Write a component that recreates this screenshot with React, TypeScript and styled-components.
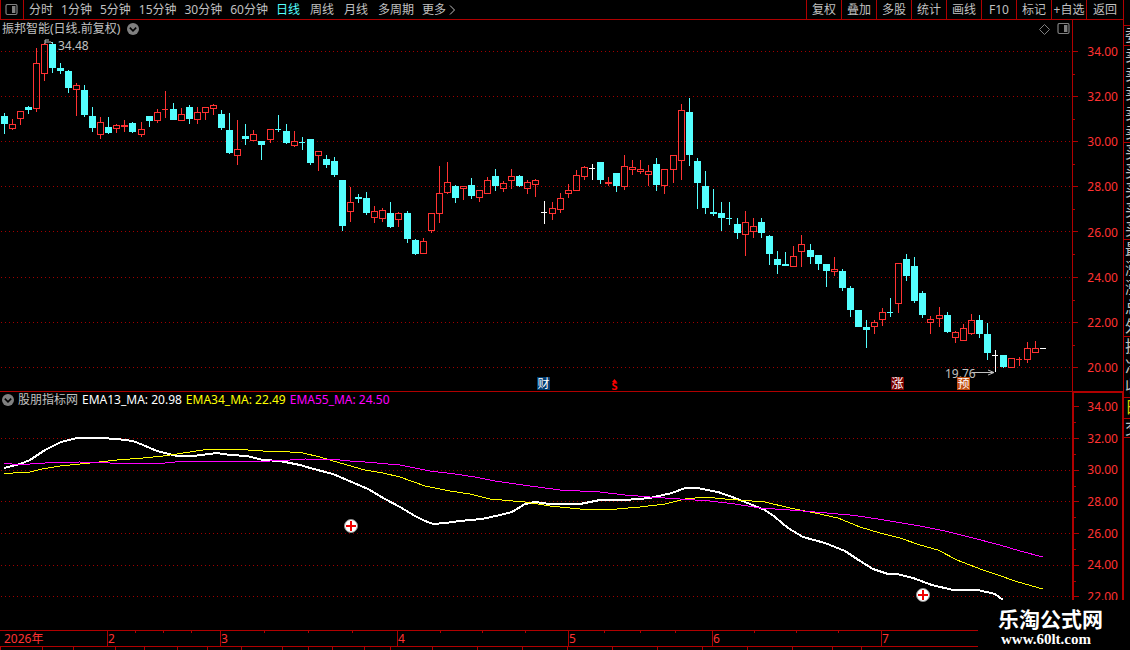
import React from "react";
import styled, { createGlobalStyle } from "styled-components";

const color = {
  line: "#b00000",
  dot: "#a00000",
  priceText: "#ff3232",
  up: "#ff3232",
  down: "#54ffff",
  flat: "#ffffff",
  text: "#c0c0c0",
  icon: "#808080",
};

const GlobalStyle = createGlobalStyle`
  * { box-sizing: border-box; }
  body {
    margin: 0;
    background: #000;
    color: ${color.text};
    font-family: "Noto Sans", "Noto Sans CJK SC", sans-serif;
    font-size: 12px;
    line-height: 16px;
    overflow: hidden;
  }
`;

type Kind = "u" | "d" | "w";
/* centre x, high, body top, body bottom, low, kind */
type Candle = [number, number, number, number, number, Kind];

const candles: Candle[] = [
  [4, 113, 116, 124, 134, "d"], [12, 119, 124, 129, 130, "u"], [20, 111, 111, 119, 125, "u"],
  [28, 106, 107, 110, 114, "d"], [36, 48, 63, 109, 112, "u"], [44, 43, 44, 74, 81, "u"],
  [52, 42, 44, 68, 73, "d"], [60, 63, 68, 71, 74, "d"], [68, 70, 71, 88, 93, "d"],
  [76, 83, 85, 90, 116, "u"], [84, 85, 90, 115, 117, "d"], [92, 107, 116, 128, 132, "d"],
  [100, 117, 122, 135, 139, "u"], [108, 117, 127, 133, 134, "d"], [116, 124, 125, 129, 133, "u"],
  [124, 120, 125, 127, 132, "u"], [132, 122, 123, 132, 133, "d"], [141, 122, 129, 135, 137, "u"],
  [149, 116, 116, 121, 127, "d"], [157, 109, 112, 121, 123, "u"], [165, 91, 109, 110, 118, "u"],
  [173, 103, 109, 120, 120, "d"], [181, 108, 114, 121, 121, "u"], [189, 105, 107, 119, 124, "d"],
  [197, 107, 112, 120, 124, "u"], [205, 107, 107, 113, 120, "u"], [213, 104, 105, 109, 115, "u"],
  [221, 110, 114, 128, 130, "d"], [229, 113, 130, 153, 154, "d"], [237, 120, 149, 156, 165, "u"],
  [245, 124, 136, 139, 145, "d"], [253, 130, 134, 141, 141, "u"], [261, 141, 141, 145, 160, "d"],
  [270, 129, 129, 140, 143, "u"], [278, 115, 129, 130, 132, "d"], [286, 124, 131, 143, 144, "d"],
  [294, 131, 141, 146, 147, "u"], [302, 137, 142, 143, 150, "d"], [310, 139, 139, 163, 165, "d"],
  [318, 151, 151, 156, 171, "u"], [326, 155, 159, 165, 168, "d"], [334, 157, 161, 175, 177, "d"],
  [342, 180, 180, 226, 231, "d"], [350, 187, 202, 212, 222, "u"], [358, 194, 197, 199, 203, "d"],
  [366, 192, 198, 213, 215, "d"], [374, 206, 211, 218, 223, "u"], [382, 208, 210, 219, 222, "u"],
  [390, 202, 213, 227, 228, "d"], [398, 212, 213, 220, 227, "u"], [407, 211, 213, 239, 243, "d"],
  [415, 239, 240, 254, 255, "d"], [423, 238, 241, 254, 254, "u"], [431, 213, 213, 231, 233, "u"],
  [439, 166, 193, 214, 223, "u"], [447, 162, 182, 193, 194, "u"], [455, 185, 186, 198, 203, "d"],
  [463, 186, 186, 189, 200, "u"], [471, 178, 185, 196, 199, "d"], [479, 190, 190, 198, 202, "u"],
  [487, 177, 180, 194, 194, "u"], [495, 169, 176, 186, 191, "d"], [503, 181, 183, 189, 192, "u"],
  [511, 169, 176, 181, 189, "u"], [519, 175, 176, 186, 187, "d"], [527, 180, 182, 189, 194, "u"],
  [535, 179, 180, 185, 197, "u"], [544, 201, 212, 213, 224, "w"], [552, 202, 208, 214, 220, "u"],
  [560, 193, 198, 210, 213, "u"], [568, 184, 190, 194, 198, "u"], [576, 170, 175, 191, 191, "u"],
  [584, 166, 167, 177, 180, "u"], [592, 164, 168, 169, 180, "w"], [600, 162, 162, 180, 184, "d"],
  [608, 177, 182, 184, 186, "u"], [616, 173, 173, 186, 192, "d"], [624, 155, 166, 187, 190, "u"],
  [632, 160, 167, 170, 175, "u"], [640, 160, 169, 172, 174, "u"], [648, 165, 171, 175, 186, "u"],
  [656, 158, 164, 185, 191, "d"], [664, 169, 169, 186, 194, "u"], [673, 155, 155, 170, 183, "u"],
  [681, 104, 110, 161, 180, "u"], [689, 98, 112, 155, 166, "d"], [697, 158, 161, 183, 209, "d"],
  [705, 171, 186, 208, 214, "d"], [713, 189, 212, 214, 216, "d"], [721, 202, 213, 218, 231, "d"],
  [729, 202, 218, 219, 225, "d"], [737, 218, 224, 233, 239, "d"], [745, 211, 222, 235, 256, "u"],
  [753, 218, 226, 232, 238, "u"], [761, 218, 222, 233, 238, "d"], [769, 235, 236, 254, 265, "d"],
  [777, 251, 259, 265, 274, "d"], [785, 252, 264, 266, 266, "d"], [793, 246, 256, 267, 267, "u"],
  [801, 235, 244, 252, 267, "u"], [810, 244, 250, 257, 264, "d"], [818, 255, 255, 264, 270, "d"],
  [826, 264, 264, 271, 287, "d"], [834, 257, 269, 272, 276, "u"], [842, 269, 271, 288, 291, "d"],
  [850, 286, 288, 310, 317, "d"], [858, 310, 310, 327, 327, "d"], [866, 320, 327, 330, 348, "d"],
  [874, 320, 322, 327, 334, "u"], [882, 308, 312, 320, 326, "u"], [890, 298, 312, 313, 317, "d"],
  [898, 263, 263, 304, 313, "u"], [906, 254, 259, 276, 281, "d"], [914, 257, 266, 301, 303, "d"],
  [922, 291, 293, 315, 318, "d"], [930, 316, 319, 323, 334, "u"], [939, 307, 315, 319, 327, "u"],
  [947, 312, 315, 332, 333, "d"], [955, 331, 332, 338, 343, "u"], [963, 324, 328, 341, 341, "u"],
  [971, 314, 320, 334, 335, "u"], [979, 315, 320, 334, 338, "d"], [987, 323, 334, 353, 360, "d"],
  [995, 350, 355, 356, 372, "w"], [1003, 355, 355, 367, 368, "d"], [1011, 358, 358, 368, 368, "u"],
  [1019, 357, 359, 360, 366, "u"], [1027, 342, 348, 360, 363, "u"], [1035, 341, 348, 353, 353, "u"],
  [1043, 348, 348, 349, 349, "w"],
];

const ema13 =
  "4,468 12,466 20,464 30,460 45,450 61,442 77,438 100,438 117,439 133,441 143,445 157,451 177,456 193,456 217,453 230,455 247,456 263,460 280,461 300,465 310,468 333,474 347,480 368,489 385,499 400,507 415,516 425,521 433,524 445,523 460,521 482,519 500,515 512,512 525,504 535,502 550,504 580,504 600,500 625,500 650,498 672,493 685,488 697,488 718,492 735,498 750,504 765,510 775,517 788,528 803,537 825,543 845,551 860,561 873,569 888,574 897,574 913,578 932,585 953,590 978,590 995,594 1003,600";
const ema34 =
  "4,473 13,473 30,472 42,469 60,466 90,463 117,460 143,458 163,456 177,454 203,450 213,449 233,449 263,451 290,452 303,453 320,457 340,463 365,470 383,473 400,477 425,486 450,491 470,494 490,499 525,502 550,506 580,509 605,510 640,507 665,504 685,499 705,497 725,499 765,502 790,508 815,513 838,518 860,527 880,533 900,538 920,545 938,550 957,560 983,570 995,574 1018,582 1043,589";
const ema55 =
  "4,463 12,464 30,464 45,463 80,462 110,463 165,463 175,462 205,461 270,461 290,460 305,459 340,460 350,461 365,462 400,465 430,471 455,474 475,477 495,481 530,486 560,490 600,492 625,495 650,497 680,499 710,501 735,504 760,508 790,510 815,512 850,515 865,517 890,521 920,526 945,531 965,536 1000,545 1020,551 1043,557";

const upperGrid = [51, 96, 141, 186, 231, 277, 322, 367];
const upperMinor = [74, 119, 164, 209, 254, 300, 345];
const lowerGrid = [438, 470, 501, 533, 565, 596];
const lowerMajor = [406, ...lowerGrid];
const lowerMinor = [422, 454, 486, 517, 549, 581];
const upperPrices = ["34.00", "32.00", "30.00", "28.00", "26.00", "24.00", "22.00", "20.00"];
const lowerPrices = upperPrices.slice(0, 7);

const Page = styled.div`
  position: relative;
  display: flex;
  min-height: 100vh;
  overflow: hidden;
`;

const Main = styled.main`
  flex: 1;
  min-width: 0;
`;

const Toolbar = styled.nav`
  display: flex;
  height: 20px;
  border-bottom: 1px solid ${color.line};
`;

const PlainButton = styled.button`
  padding: 0;
  border: 0;
  background: none;
  color: inherit;
  font: inherit;
  white-space: nowrap;
`;

const IconButton = styled(PlainButton)`
  display: flex;
`;

const LayoutButton = styled(PlainButton)`
  display: flex;
  align-items: center;
  width: 24px;
  padding: 0 4px;
  border: solid ${color.line};
  border-width: 0 1px;
`;

const PeriodGroup = styled.div<{ $gap: number }>`
  display: flex;
  align-items: center;
  gap: ${(p) => p.$gap}px;
`;

const Periods = styled.div`
  display: flex;
  flex: 1;
  gap: 8px;
  padding-left: 5px;
`;

const PeriodButton = styled(PlainButton)<{ $active?: boolean }>`
  display: flex;
  align-items: center;
  gap: 3px;
  color: ${(p) => (p.$active ? color.down : color.text)};
`;

const ActionButton = styled(PlainButton)`
  width: 35px;
  border-left: 1px solid ${color.line};
  text-align: center;

  &:last-child {
    width: 37px;
  }
`;

const Panel = styled.section<{ $height: number; $divided?: boolean }>`
  display: flex;
  height: ${(p) => p.$height}px;
  border-bottom: ${(p) => (p.$divided ? `1px solid ${color.line}` : "0")};
`;

const Plot = styled.div`
  flex: 1;
  min-width: 0;
  display: grid;
  grid-template: 100% / 100%;

  > * {
    grid-area: 1 / 1;
  }
`;

const Drawing = styled.svg`
  display: block;
  width: 100%;
  height: 100%;
`;

const PlotHeader = styled.header<{ $height: number; $gap: number }>`
  display: flex;
  align-items: center;
  align-self: start;
  gap: ${(p) => p.$gap}px;
  height: ${(p) => p.$height}px;
  padding: 0 2px;
`;

const Title = styled.h1`
  margin: 0;
  font: inherit;
`;

const Reading = styled.span<{ $color: string }>`
  color: ${(p) => p.$color};
  white-space: nowrap;
`;

const IndicatorName = styled.h2`
  margin: 0;
  font: inherit;
`;

const HeaderTools = styled.div`
  display: flex;
  align-items: center;
  gap: 7px;
  margin-left: auto;
`;

const PriceAxis = styled.aside<{ $framed?: boolean }>`
  display: flex;
  width: 51px;
  border-left: ${(p) => (p.$framed ? 2 : 1)}px solid ${color.line};
  border-top: ${(p) => (p.$framed ? `1px solid ${color.line}` : "0")};
  border-right: ${(p) => (p.$framed ? `1px solid ${color.line}` : "0")};
`;

const Ticks = styled.svg`
  flex: none;
  width: 6px;
  height: 100%;
`;

const PriceList = styled.ol<{ $top: number; $right: number; $bottom: number }>`
  display: flex;
  flex: 1;
  flex-direction: column;
  justify-content: space-between;
  margin: 0;
  padding: ${(p) => p.$top}px ${(p) => p.$right}px ${(p) => p.$bottom}px 0;
  color: ${color.priceText};
  list-style: none;
  text-align: right;
`;

const TimeAxis = styled.ol`
  display: flex;
  height: 17px;
  margin: 0;
  padding: 0;
  border: solid ${color.line};
  border-width: 1px 0;
  color: ${color.priceText};
  list-style: none;
`;

const Month = styled.li<{ $width: number; $first?: boolean }>`
  display: grid;
  grid-template: 16px / repeat(4, 1fr);
  width: ${(p) => p.$width}px;
  border-left: ${(p) => (p.$first ? "0" : `1px solid ${color.line}`)};
`;

const MonthLabel = styled.span<{ $indent: number }>`
  grid-area: 1 / 1 / 2 / 5;
  padding-left: ${(p) => p.$indent}px;
`;

const WeekTick = styled.i<{ $column: number }>`
  grid-area: 1 / ${(p) => p.$column};
  height: 2px;
  border-right: 1px solid ${color.line};
`;

const TabStrip = styled.div`
  display: flex;
  height: 3px;
  overflow: hidden;
`;

const Tab = styled(PlainButton)<{ $width: number; $active?: boolean }>`
  flex: none;
  width: ${(p) => p.$width}px;
  height: 18px;
  padding-top: 1px;
  border-left: 1px solid ${color.line};
  color: ${(p) => (p.$active ? color.down : color.text)};
`;

const Quotes = styled.aside`
  display: flex;
  flex: none;
  flex-direction: column;
  width: 7px;
  overflow: hidden;
  border-left: 1px solid ${color.line};
`;

const QuoteGroup = styled.div<{ $height: number; $accent?: boolean }>`
  display: flex;
  flex: none;
  flex-direction: column;
  height: ${(p) => p.$height}px;
  border-bottom: 1px solid ${color.line};
  padding-left: 1px;
  color: ${(p) => (p.$accent ? "#d0d000" : color.text)};
  font-size: 16px;
  line-height: 18px;
`;

const QuoteRow = styled.span`
  flex: 1;
  white-space: nowrap;
`;

const Brand = styled.footer`
  position: absolute;
  right: 0;
  bottom: 0;
  width: 152px;
  height: 50px;
  padding: 7px 0 0 20px;
  background: #000;
  color: #fff;
`;

const BrandName = styled.strong`
  display: block;
  font: 700 21px/22px "Noto Sans CJK SC", sans-serif;
`;

const BrandLink = styled.a`
  display: block;
  padding-left: 3px;
  color: inherit;
  font: 700 15px/20px "Liberation Serif", serif;
  text-decoration: none;
`;

const SidePaneIcon = () => (
  <svg width="13" height="12" viewBox="0 0 13 12" aria-hidden="true">
    <rect x="1" y="0.5" width="11" height="10" rx="1.5" fill="none" stroke={color.icon} strokeWidth="1.2" />
    <rect x="7" y="2" width="3.4" height="7" fill={color.icon} />
  </svg>
);

const ExpandIcon = () => (
  <svg width="12" height="12" viewBox="0 0 12 12" aria-hidden="true">
    <circle cx="6" cy="6" r="6" fill={color.icon} />
    <path d="M2.8 4.6 6 7.8l3.2-3.2" fill="none" stroke="#000" strokeWidth="1.6" />
  </svg>
);

const DiamondIcon = () => (
  <svg width="11" height="11" viewBox="0 0 11 11" aria-hidden="true">
    <path d="M5.5.5l5 5-5 5-5-5z" fill="none" stroke={color.icon} />
  </svg>
);

const MoreIcon = () => (
  <svg width="7" height="10" viewBox="0 0 7 10" aria-hidden="true">
    <path d="M1 .5 5.5 5 1 9.5" fill="none" stroke={color.text} />
  </svg>
);

const GridLines = ({ rows }: { rows: number[] }) => (
  <g stroke={color.dot} strokeDasharray="1 3" shapeRendering="crispEdges">
    {rows.map((y) => (
      <line key={y} x1="1" x2="100%" y1={y + 0.5} y2={y + 0.5} />
    ))}
  </g>
);

const CandleMark = ({ c: [x, high, top, bottom, low, kind] }: { c: Candle }) => {
  const paint = kind === "u" ? color.up : kind === "d" ? color.down : color.flat;
  const hollow = kind === "u" && bottom - top > 2;
  const thin = bottom - top === 1;
  return (
    <g fill={paint}>
      {high < top && <rect x={x} y={high} width="1" height={top - high} />}
      {low > bottom && <rect x={x} y={bottom} width="1" height={low - bottom} />}
      {hollow ? (
        <rect x={x - 2.5} y={top + 0.5} width="6" height={bottom - top - 1} fill="none" stroke={paint} />
      ) : (
        <rect x={x - 3} y={top} width={thin ? 6 : 7} height={bottom - top} />
      )}
    </g>
  );
};

const EventBadge = ({ x, fill, label }: { x: number; fill: string; label: string }) => (
  <g>
    <rect x={x} y="377" width="13" height="13" fill={fill} />
    <text x={x + 6.5} y="388" fill="#fff" textAnchor="middle" fontSize="12">
      {label}
    </text>
  </g>
);

const Signal = ({ x, y }: { x: number; y: number }) => (
  <g>
    <circle cx={x} cy={y} r="6.5" fill="#fff" stroke="#909090" />
    <path d={`M${x - 5} ${y}h10M${x} ${y - 5}v10`} stroke="#f00000" strokeWidth="2" />
  </g>
);

const AxisTicks = ({ top, major, minor }: { top: number; major: number[]; minor: number[] }) => (
  <Ticks aria-hidden="true">
    <g transform={`translate(0 ${-top})`} fill={color.line}>
      {major.map((y) => (
        <rect key={y} x="0" y={y} width="5" height="1" />
      ))}
      {minor.map((y) => (
        <rect key={y} x="0" y={y} width="2" height="1" />
      ))}
    </g>
  </Ticks>
);

const months = [
  { label: "2026年", width: 107 },
  { label: "2", width: 113 },
  { label: "3", width: 177 },
  { label: "4", width: 171 },
  { label: "5", width: 144 },
  { label: "6", width: 169 },
  { label: "7", width: 160 },
];

const tabs: [string, number][] = [
  ["指标A", 42], ["窗口", 31], ["MACD", 42], ["DMI", 29], ["DMA", 33], ["FSL", 30], ["TRIX", 34],
  ["BRAR", 41], ["CR", 26], ["VR", 24], ["OBV", 32], ["ASI", 26], ["EMV", 42], ["VOL", 45], ["RSI", 45],
  ["WR", 45], ["SAR", 45], ["KDJ", 45], ["CCI", 45], ["ROC", 45], ["MTM", 45], ["模板", 40], ["设置", 29], ["", 107],
];

const quoteGroups: { height: number; rows: string[]; accent?: boolean }[] = [
  { height: 26, rows: [] },
  { height: 20, rows: ["委比"] },
  { height: 97, rows: ["卖五", "卖四", "卖三", "卖二", "卖一"] },
  { height: 97, rows: ["买一", "买二", "买三", "买四", "买五"] },
  { height: 97, rows: ["最新", "涨跌", "涨幅", "总量", "外盘"] },
  { height: 61, rows: ["换手", "净资", "收益"] },
  { height: 21, rows: ["日期"], accent: true },
  { height: 19, rows: ["交易"] },
];

export default function App() {
  return (
    <>
      <GlobalStyle />
      <Page>
        <Main>
          <Toolbar>
            <LayoutButton aria-label="布局">
              <SidePaneIcon />
            </LayoutButton>
            <Periods>
              <PeriodGroup $gap={8}>
                {["分时", "1分钟", "5分钟", "15分钟", "30分钟", "60分钟"].map((p) => (
                  <PeriodButton key={p}>{p}</PeriodButton>
                ))}
              </PeriodGroup>
              <PeriodGroup $gap={10}>
                {["日线", "周线", "月线", "多周期"].map((p) => (
                  <PeriodButton key={p} $active={p === "日线"}>
                    {p}
                  </PeriodButton>
                ))}
              </PeriodGroup>
              <PeriodButton>
                更多
                <MoreIcon />
              </PeriodButton>
            </Periods>
            {["复权", "叠加", "多股", "统计", "画线", "F10", "标记", "+自选", "返回"].map((a) => (
              <ActionButton key={a}>{a}</ActionButton>
            ))}
          </Toolbar>

          <Panel $height={372} $divided>
            <Plot>
              <Drawing role="img" aria-label="日线">
                <g transform="translate(0 -20)">
                  <GridLines rows={upperGrid} />
                  <g shapeRendering="crispEdges">
                    {candles.map((c) => (
                      <CandleMark key={c[0]} c={c} />
                    ))}
                  </g>
                  <path d="M49 40h-4v2h3M45 42v2M48 42h3l2 2" fill="none" stroke={color.text} />
                  <text x="58" y="50" fill={color.text}>34.48</text>
                  <text x="945" y="378" fill={color.text}>19.76</text>
                  <path d="M972 372.5h22M988 370l6 2.5-6 2.5" fill="none" stroke={color.text} />
                  <EventBadge x={537} fill="#003c70" label="财" />
                  <EventBadge x={891} fill="#780000" label="涨" />
                  <EventBadge x={957} fill="#c04c10" label="预" />
                  <path d="M612 382l2.500-3 2.500 3z" fill="#ff0000" />
                  <text x="614.5" y="390" fill="#ff0000" textAnchor="middle" fontSize="11" fontWeight="700">
                    S
                  </text>
                </g>
              </Drawing>
              <PlotHeader $height={18} $gap={7}>
                <Title>振邦智能(日线.前复权)</Title>
                <IconButton aria-label="展开">
                  <ExpandIcon />
                </IconButton>
                <HeaderTools>
                  <DiamondIcon />
                  <SidePaneIcon />
                </HeaderTools>
              </PlotHeader>
            </Plot>
            <PriceAxis>
              <AxisTicks top={20} major={upperGrid} minor={upperMinor} />
              <PriceList $top={24} $right={5} $bottom={15}>
                {upperPrices.map((p) => (
                  <li key={p}>{p}</li>
                ))}
              </PriceList>
            </PriceAxis>
          </Panel>

          <Panel $height={238}>
            <Plot>
              <Drawing role="img" aria-label="EMA">
                <g transform="translate(0 -392)">
                  <GridLines rows={lowerGrid} />
                  <g fill="none" shapeRendering="crispEdges">
                    <polyline points={ema13} stroke="#fff" strokeWidth="2" />
                    <polyline points={ema34} stroke="#ffff00" />
                    <polyline points={ema55} stroke="#ff00ff" />
                  </g>
                  <Signal x={351} y={526} />
                  <Signal x={923} y={595} />
                </g>
              </Drawing>
              <PlotHeader $height={16} $gap={4}>
                <IconButton aria-label="展开">
                  <ExpandIcon />
                </IconButton>
                <IndicatorName>股朋指标网</IndicatorName>
                <Reading $color="#fff">EMA13_MA: 20.98</Reading>
                <Reading $color="#ffff00">EMA34_MA: 22.49</Reading>
                <Reading $color="#ff00ff">EMA55_MA: 24.50</Reading>
              </PlotHeader>
            </Plot>
            <PriceAxis $framed>
              <AxisTicks top={393} major={lowerMajor} minor={lowerMinor} />
              <PriceList $top={6} $right={4} $bottom={25}>
                {lowerPrices.map((p) => (
                  <li key={p}>{p}</li>
                ))}
              </PriceList>
            </PriceAxis>
          </Panel>

          <TimeAxis>
            {months.map((m, i) => (
              <Month key={m.label} $width={m.width} $first={i === 0}>
                <MonthLabel $indent={i === 0 ? 4 : 0}>{m.label}</MonthLabel>
                {i > 0 && i < 6 && [1, 2, 3].map((n) => <WeekTick key={n} $column={n} />)}
              </Month>
            ))}
          </TimeAxis>
          <TabStrip>
            {tabs.map(([label, width]) => (
              <Tab key={label} $width={width} $active={label === "设置"}>
                {label}
              </Tab>
            ))}
          </TabStrip>
        </Main>

        <Quotes>
          {quoteGroups.map((g, i) => (
            <QuoteGroup key={i} $height={g.height} $accent={g.accent}>
              {g.rows.map((r) => (
                <QuoteRow key={r}>{r}</QuoteRow>
              ))}
            </QuoteGroup>
          ))}
        </Quotes>

        <Brand>
          <BrandName>乐淘公式网</BrandName>
          <BrandLink href="#">www.60lt.com</BrandLink>
        </Brand>
      </Page>
    </>
  );
}
